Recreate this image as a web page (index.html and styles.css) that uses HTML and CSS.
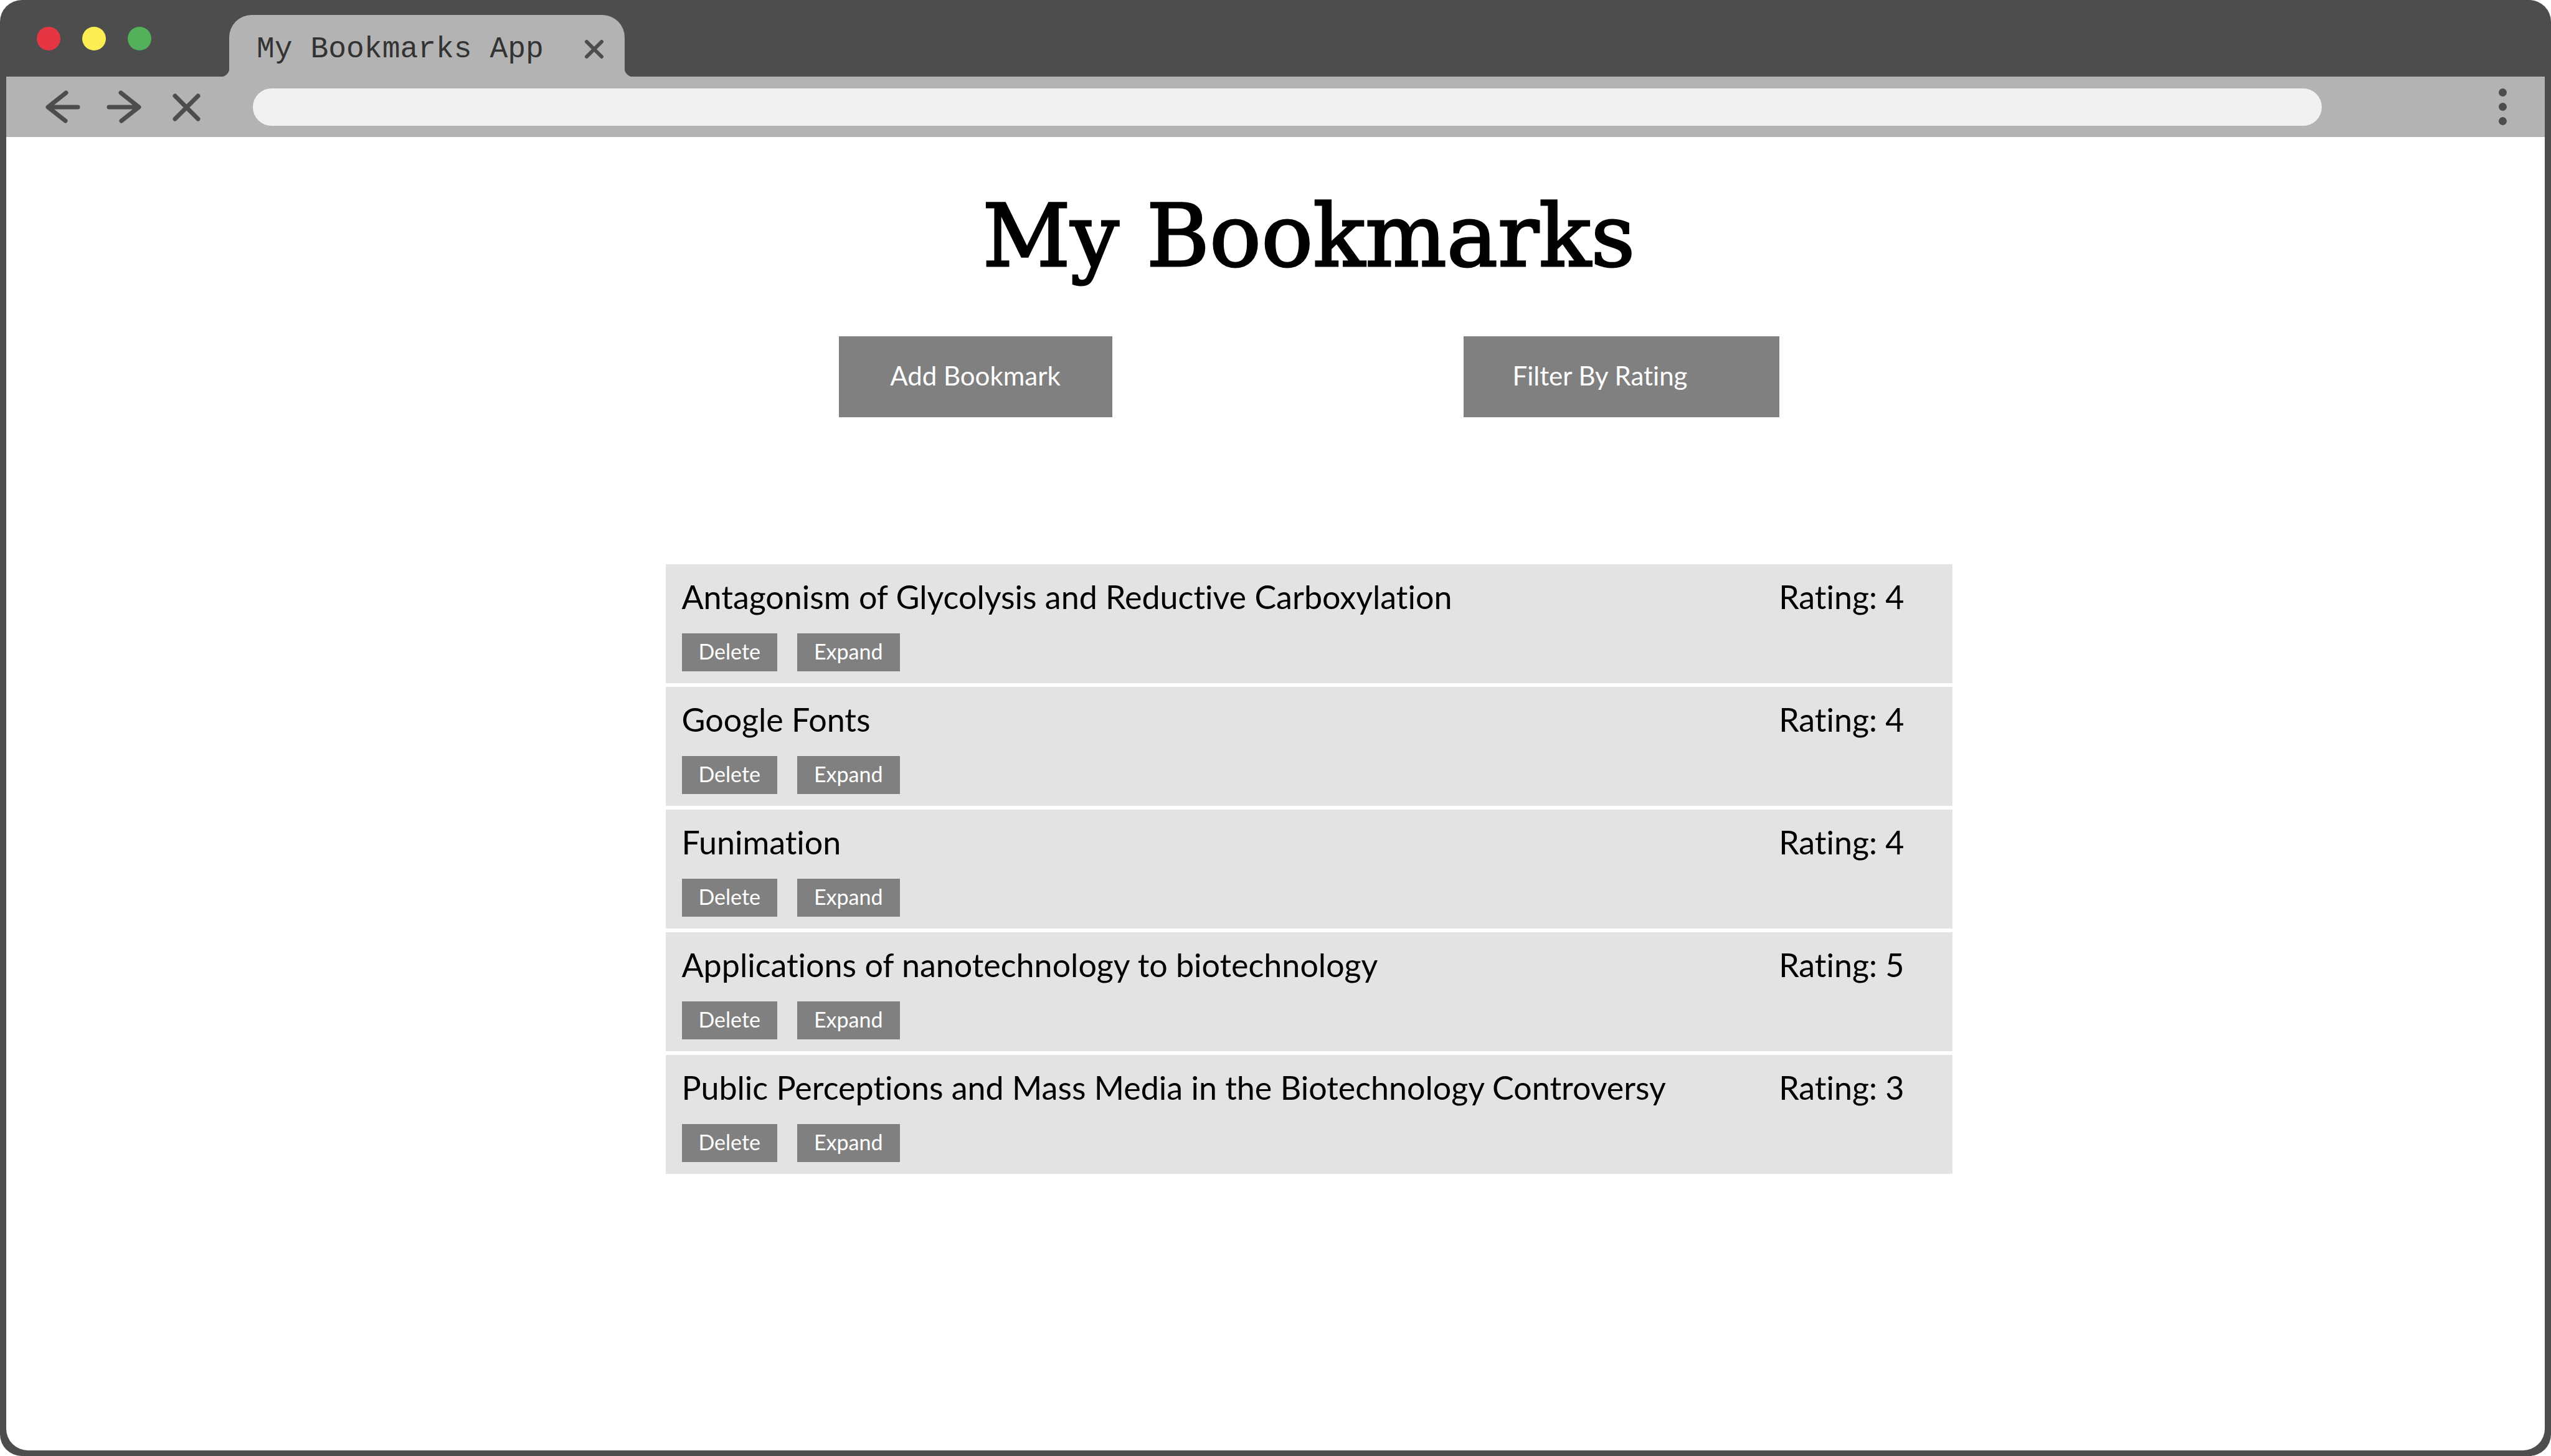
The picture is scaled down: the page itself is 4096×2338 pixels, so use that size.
FILE: index.html
```html
<!DOCTYPE html>
<html lang="en">
<head>
<meta charset="utf-8">
<meta name="viewport" content="width=device-width, initial-scale=1">
<title>My Bookmarks App</title>
<link rel="stylesheet" href="styles.css">
</head>
<body>
<div class="window">
  <header class="titlebar">
    <div class="lights">
      <span class="light light-close"></span>
      <span class="light light-minimize"></span>
      <span class="light light-zoom"></span>
    </div>
    <div class="tab">
      <span class="tab-title">My Bookmarks App</span>
      <button class="icon-button tab-close" type="button" aria-label="Close tab">
        <svg viewBox="0 0 32 32" aria-hidden="true"><path d="M4 4 28 28M28 4 4 28"/></svg>
      </button>
    </div>
  </header>
  <nav class="toolbar" aria-label="Browser controls">
    <div class="nav-buttons">
      <button class="icon-button" type="button" aria-label="Back">
        <svg viewBox="0 0 60 60" aria-hidden="true"><path d="M36 7 7 30 35 52M8 30H55"/></svg>
      </button>
      <button class="icon-button" type="button" aria-label="Forward">
        <svg viewBox="0 0 60 60" aria-hidden="true"><path d="M24 7 53 30 25 52M52 30H5"/></svg>
      </button>
      <button class="icon-button" type="button" aria-label="Stop">
        <svg viewBox="0 0 60 60" aria-hidden="true"><path d="M11 12 48 49M48 12 11 49"/></svg>
      </button>
    </div>
    <input class="address" type="text" aria-label="Address">
    <button class="icon-button menu-button" type="button" aria-label="Menu">
      <span class="dot"></span><span class="dot"></span><span class="dot"></span>
    </button>
  </nav>
  <main class="page">
    <h1 class="heading">My Bookmarks</h1>
    <div class="actions">
      <button class="action" type="button">Add Bookmark</button>
      <select class="action action-filter" aria-label="Filter by rating">
        <option>Filter By Rating</option>
      </select>
    </div>
    <ul class="bookmarks">
      <li class="bookmark">
        <div class="bookmark-head"><h2 class="bookmark-title">Antagonism of Glycolysis and Reductive Carboxylation</h2><span>Rating: 4</span></div>
        <div class="bookmark-actions"><button class="small-button" type="button">Delete</button><button class="small-button" type="button">Expand</button></div>
      </li>
      <li class="bookmark">
        <div class="bookmark-head"><h2 class="bookmark-title">Google Fonts</h2><span>Rating: 4</span></div>
        <div class="bookmark-actions"><button class="small-button" type="button">Delete</button><button class="small-button" type="button">Expand</button></div>
      </li>
      <li class="bookmark">
        <div class="bookmark-head"><h2 class="bookmark-title">Funimation</h2><span>Rating: 4</span></div>
        <div class="bookmark-actions"><button class="small-button" type="button">Delete</button><button class="small-button" type="button">Expand</button></div>
      </li>
      <li class="bookmark">
        <div class="bookmark-head"><h2 class="bookmark-title">Applications of nanotechnology to biotechnology</h2><span>Rating: 5</span></div>
        <div class="bookmark-actions"><button class="small-button" type="button">Delete</button><button class="small-button" type="button">Expand</button></div>
      </li>
      <li class="bookmark">
        <div class="bookmark-head"><h2 class="bookmark-title">Public Perceptions and Mass Media in the Biotechnology Controversy</h2><span>Rating: 3</span></div>
        <div class="bookmark-actions"><button class="small-button" type="button">Delete</button><button class="small-button" type="button">Expand</button></div>
      </li>
    </ul>
  </main>
</div>
</body>
</html>
```
FILE: styles.css
```css
:root {
  --frame: #4d4d4d;
  --chrome: #b3b3b3;
  --button: #808080;
}

* {
  box-sizing: border-box;
}

body {
  margin: 0;
  background: #fff;
  color: #000;
  font-family: Lato, sans-serif;
  font-variant-ligatures: none;
}

button,
select,
input {
  margin: 0;
  border: 0;
  border-radius: 0;
  font-family: inherit;
  font-variant-ligatures: none;
}

/* Browser frame */
.window {
  display: flex;
  flex-direction: column;
  min-height: 100vh;
  padding: 0 10px 9px;
  border-radius: 35px;
  background: var(--frame);
}

.titlebar {
  display: flex;
  align-items: center;
  gap: 125px;
  height: 123px;
  padding-left: 49px;
}

.lights {
  display: flex;
  gap: 35px;
}

.light {
  width: 38px;
  height: 38px;
  border-radius: 50%;
}

.light-close { background: #e63643; }
.light-minimize { background: #fded55; }
.light-zoom { background: #53b15c; }

.tab {
  position: relative;
  display: flex;
  align-items: center;
  justify-content: space-between;
  align-self: flex-end;
  width: 635px;
  height: 99px;
  padding: 10px 33px 0 44px;
  border-radius: 36px 36px 0 0;
  background: var(--chrome);
  color: #333;
  font: 48px/56px "Liberation Mono", monospace;
  white-space: nowrap;
}

/* Curved feet where the tab meets the toolbar */
.tab::before,
.tab::after {
  content: "";
  position: absolute;
  bottom: 0;
  width: 14px;
  height: 14px;
}

.tab::before {
  right: 100%;
  background: radial-gradient(circle at 0 0, transparent 14px, var(--chrome) 15px);
}

.tab::after {
  left: 100%;
  background: radial-gradient(circle at 100% 0, transparent 14px, var(--chrome) 15px);
}

.icon-button {
  flex: none;
  width: 60px;
  height: 60px;
  padding: 0;
  background: none;
}

.icon-button svg {
  display: block;
  width: 100%;
  height: 100%;
  fill: none;
  stroke: var(--frame);
  stroke-width: 7;
  stroke-linecap: round;
  stroke-linejoin: round;
}

.tab-close {
  width: 32px;
  height: 32px;
}

.tab-close svg {
  stroke-width: 6;
}

.toolbar {
  display: flex;
  align-items: center;
  height: 97px;
  padding: 0 38px 0 60px;
  background: var(--chrome);
}

.nav-buttons {
  display: flex;
  gap: 40px;
  margin-right: 76px;
}

.address {
  flex: 1;
  min-width: 0;
  height: 60px;
  padding: 0 30px;
  border-radius: 30px;
  background: #f1f1f1;
  font-size: 34px;
}

.menu-button {
  display: flex;
  flex-direction: column;
  align-items: center;
  justify-content: center;
  gap: 10px;
  margin-left: 260px;
}

.dot {
  width: 13px;
  height: 13px;
  border-radius: 50%;
  background: var(--frame);
}

/* Page content */
.page {
  display: flex;
  flex: 1;
  flex-direction: column;
  align-items: center;
  padding: 80px 0 80px 107px;
  border-radius: 0 0 35px 35px;
  background: #fff;
}

.heading {
  margin: 0;
  font: 400 138px/160px "DejaVu Serif", serif;
  -webkit-text-stroke: 3px #000;
}

.actions {
  display: flex;
  gap: 564px;
  margin: 80px 0 236px;
}

.action {
  width: 439px;
  height: 130px;
  padding: 0 0 4px;
  background: var(--button);
  color: #fff;
  font-size: 42px;
}

.action-filter {
  width: 507px;
  padding-left: 79px;
  appearance: none;
}

.bookmarks {
  display: flex;
  flex-direction: column;
  gap: 6px;
  width: 100%;
  max-width: 2066px;
  margin: 0;
  padding: 0;
  list-style: none;
}

.bookmark {
  display: flex;
  flex-direction: column;
  gap: 29px;
  padding: 22px 77px 19px 26px;
  background: #e3e3e3;
  font-size: 52px;
  line-height: 60px;
}

.bookmark-head {
  display: flex;
  justify-content: space-between;
}

.bookmark-title {
  margin: 0;
  font-size: 52px;
  font-weight: 400;
}

.bookmark-actions {
  display: flex;
  gap: 32px;
}

.small-button {
  height: 61px;
  padding: 0 27px 4px;
  background: var(--button);
  color: #fff;
  font-size: 34px;
}
```
